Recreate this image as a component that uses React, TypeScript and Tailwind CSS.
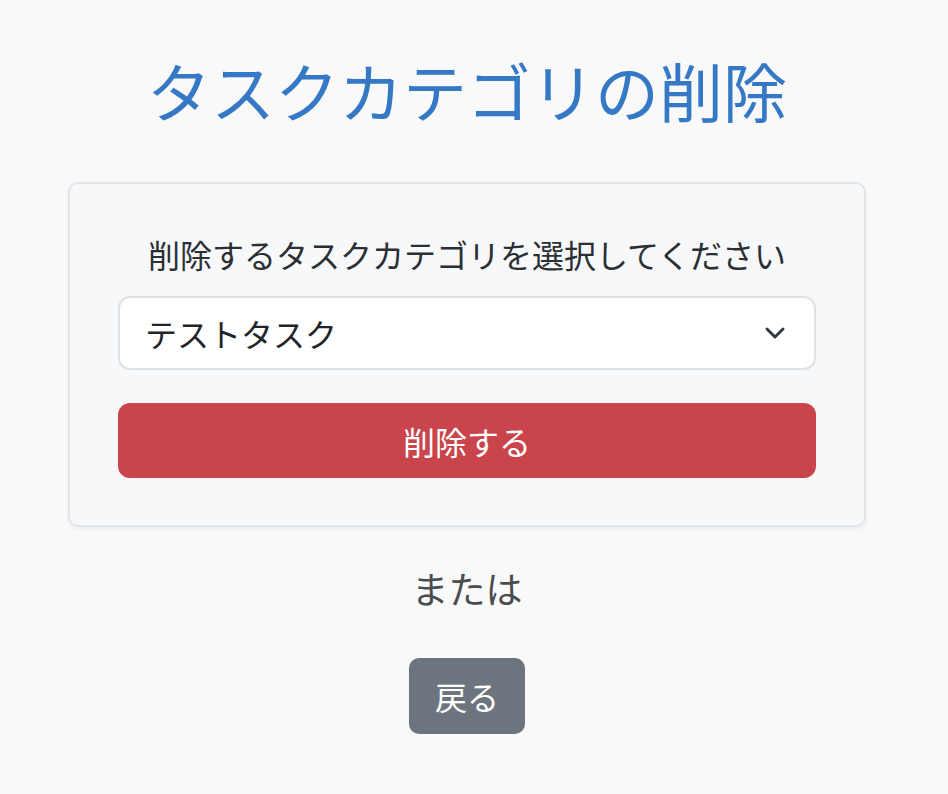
import React from "react";

export default function App() {
  const font = { fontFamily: '"Noto Sans CJK JP", "Noto Sans", sans-serif' };
  return (
    <div className="min-h-[794px] w-full bg-[#f9f9f9]" style={font}>
      <div className="w-[934px] flex flex-col items-center pt-[51px]">
        <h1 className="text-[64px] leading-[77px] text-[#3578c6] font-normal">タスクカテゴリの削除</h1>
        <div className="mt-[54px] w-[798px] rounded-[10px] border-2 border-[#e1e4e8] bg-[#f7f8fa] px-[48px] pt-[46px] pb-[47px] shadow-[0_2px_4px_rgba(0,0,0,0.06)]">
          <div className="text-center text-[32px] leading-[48px] text-[#2b2f33]">削除するタスクカテゴリを選択してください</div>
          <div className="mt-[18px] h-[74px] rounded-[12px] border-2 border-[#dee2e6] bg-white flex items-center justify-between pl-[25px] pr-[28px]">
            <span className="text-[32px] leading-[48px] text-[#212529]">テストタスク</span>
            <svg width="22" height="14" viewBox="0 0 22 14" fill="none">
              <path d="M3 3l8 8 8-8" stroke="#343a40" strokeWidth="3" strokeLinecap="round" strokeLinejoin="round" />
            </svg>
          </div>
          <button className="mt-[33px] h-[75px] w-full rounded-[12px] bg-[#ca444b] text-white text-[32px] leading-[48px]">削除する</button>
        </div>
        <div className="mt-[33px] text-[37px] leading-[56px] text-[#4a4d50]">または</div>
        <button className="mt-[42px] h-[76px] w-[116px] rounded-[10px] bg-[#6c757d] text-white text-[32px] leading-[48px]">戻る</button>
      </div>
    </div>
  );
}
